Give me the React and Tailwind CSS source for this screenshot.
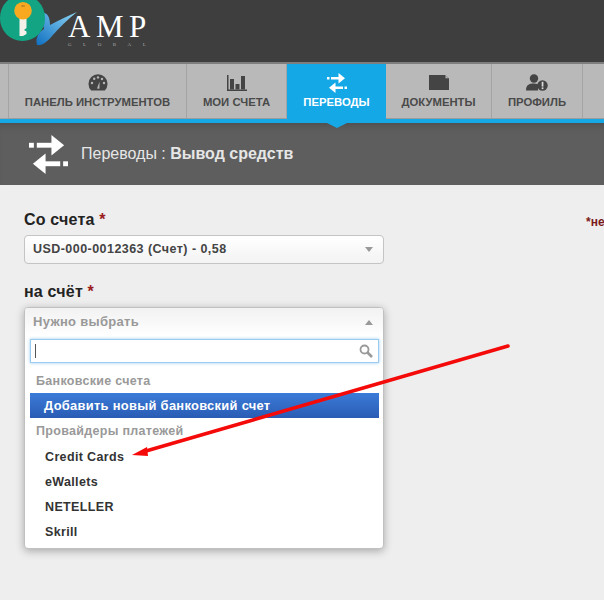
import React from "react";

const sans = "font-['Liberation_Sans',Arial,sans-serif]";

const GaugeIcon = () => (
  <svg width="20" height="18" viewBox="0 0 20 18">
    <path fill="#444" d="M3.2 16.5A9.5 9.5 0 1 1 16.8 16.5Z" />
    <g fill="#b8b8b8">
      <circle cx="4" cy="9" r="1.2" />
      <circle cx="6.2" cy="4.8" r="1.2" />
      <circle cx="10" cy="3.4" r="1.2" />
      <circle cx="14" cy="5" r="1.2" />
      <circle cx="16" cy="9" r="1.2" />
      <path d="M9 14.5L11.6 7.5L11.4 14.8Z" />
    </g>
  </svg>
);

const BarsIcon = () => (
  <svg width="20" height="16" viewBox="0 0 20 16">
    <g fill="#444">
      <rect x="0" y="0" width="1.5" height="16" />
      <rect x="0" y="14.5" width="20" height="1.5" />
      <rect x="3" y="4" width="4" height="10.5" />
      <rect x="8.5" y="9" width="4" height="5.5" />
      <rect x="14" y="1" width="4" height="13.5" />
    </g>
  </svg>
);

const TransferIcon = ({ size = 20 }) => (
  <svg width={size} height={size} viewBox="0 0 40 40" fill="#fff">
    <rect x="0" y="8" width="5" height="5" />
    <rect x="8" y="8" width="16" height="5" />
    <path d="M23 0L36 10.500L23 21Z" />
    <rect x="35" y="27" width="5" height="5" />
    <rect x="16" y="27" width="16" height="5" />
    <path d="M17 19L4 29.500L17 40Z" />
  </svg>
);

const FolderIcon = () => (
  <svg width="20" height="15" viewBox="0 0 20 15">
    <path fill="#444" d="M0 0H16L20 3.500V15H0Z" />
    <path fill="#b8b8b8" d="M16.500 0.500L19.500 3.200H16.500Z" />
  </svg>
);

const ProfileIcon = () => (
  <svg width="22" height="17" viewBox="0 0 22 17">
    <circle cx="8" cy="4.500" r="4.200" fill="#444" />
    <path fill="#444" d="M0 16.500C0 11 3 9.500 8 9.500C11 9.500 12 10.500 12 10.500V16.500Z" />
    <circle cx="16.500" cy="11.500" r="5.200" fill="#444" />
    <rect x="15.700" y="7.800" width="1.700" height="4.800" fill="#ddd" />
    <rect x="15.700" y="13.400" width="1.700" height="1.700" fill="#ddd" />
  </svg>
);

const NavTab = ({ icon, label, width, active, border }) => (
  <div
    className={`relative flex flex-col items-center shrink-0 ${width} ${
      active
        ? "h-[59px] bg-[#14a8e6] text-white pt-[9px]"
        : "h-[55px] bg-[#b9b9b9] text-[#4a4a4a] pt-[9px] border-b border-[#9c9c9c]"
    } ${border ? "border-r border-r-[#a4a4a4]" : ""}`}
  >
    <div className="h-[19px] flex items-center">{icon}</div>
    <div className="text-[11.300px] font-bold leading-none mt-[4.500px]">{label}</div>
    {active && (
      <div className="absolute left-1/2 -ml-[10px] top-[59px] w-0 h-0 border-x-[10px] border-x-transparent border-t-[5px] border-t-[#14a8e6]" />
    )}
  </div>
);

const Field = ({ label, children }) => (
  <div>
    <div className="text-[16px] leading-[18px] font-bold text-[#222] tracking-[0.2px]">
      {label} <span className="text-[#9b1c1c]">*</span>
    </div>
    {children}
  </div>
);

const Option = ({ children }) => (
  <div className="h-[25.300px] pl-[20px] text-[12.500px] leading-[25px] font-bold text-[#333] tracking-[0.35px]">{children}</div>
);

const GroupLabel = ({ children }) => (
  <div className="pl-[11px] text-[12.500px] leading-[18px] font-bold text-[#999] tracking-[0.3px]">{children}</div>
);

export default function App() {
  return (
    <div className={`relative w-[604px] h-[600px] overflow-hidden bg-[#eeeeee] ${sans}`}>
      {/* HEADER */}
      <div className="h-[62px] bg-[#3e3e3e] flex items-start pl-[36px]">
        <svg className="mt-[11px] shrink-0" width="42" height="35" viewBox="0 0 42 35">
          <defs>
            <linearGradient id="swoosh" x1="0" y1="1" x2="1" y2="0">
              <stop offset="0" stopColor="#0f6fc0" />
              <stop offset="1" stopColor="#8fd6f5" />
            </linearGradient>
          </defs>
          <path fill="url(#swoosh)" d="M1 34C-1 27 3 21 8 18C7 13 5 5 8 2C13 3 14 9 14 14C22 10 31 5 41 1C31 9 23 17 16 25C11 31 6 35 1 34Z" />
        </svg>
        <div className="ml-[-10px] mt-[14px] flex flex-col items-start font-['Liberation_Serif',serif] text-white">
          <div className="text-[31px] leading-[26px] tracking-[5.500px]">AMP</div>
          <div className="text-[5px] leading-[5px] tracking-[11.500px] text-[#aaaaaa] mt-[2px]">GLOBAL</div>
        </div>
      </div>

      {/* KEY BADGE */}
      <div className="absolute left-0 top-[-5px] w-[45px] h-[46px] rounded-full bg-[#13a583] overflow-hidden">
        <svg className="absolute left-[14px] top-[7px]" width="18" height="34" viewBox="0 0 18 34">
          <path fill="#f3f1ea" d="M5.500 14H12.500V26L10 28L12.500 29.500V32L9 34H5.500Z" />
          <circle cx="9" cy="8.800" r="8.800" fill="#f8a91f" />
          <rect x="7" y="3" width="4" height="2" rx="1" fill="#c98a25" />
        </svg>
      </div>

      {/* NAV */}
      <div className="h-[61px] border-t-2 border-[#7e7e7e] bg-[#14a8e6]">
        <div className="flex items-start h-[55px]">
          <div className="w-[9px] h-[55px] shrink-0 bg-[#b9b9b9] border-r border-b border-[#a4a4a4]" />
          <NavTab width="w-[178px]" border icon={<GaugeIcon />} label="ПАНЕЛЬ ИНСТРУМЕНТОВ" />
          <NavTab width="w-[100px]" border icon={<BarsIcon />} label="МОИ СЧЕТА" />
          <NavTab width="w-[99px]" active icon={<TransferIcon />} label="ПЕРЕВОДЫ" />
          <NavTab width="w-[106px]" border icon={<FolderIcon />} label="ДОКУМЕНТЫ" />
          <NavTab width="w-[91px]" border icon={<ProfileIcon />} label="ПРОФИЛЬ" />
          <div className="flex-1 h-[55px] bg-[#b9b9b9] border-b border-[#9c9c9c]" />
        </div>
      </div>

      {/* PAGE TITLE */}
      <div className="h-[62px] bg-[#5e5e5e] flex items-center pl-[29px] shadow-[inset_0_8px_10px_-8px_#444]">
        <TransferIcon size={39} />
        <div className="ml-[13px] text-[16px] text-[#e6e6e6]">
          Переводы : <span className="font-bold">Вывод средств</span>
        </div>
      </div>

      {/* FORM */}
      <div className="relative pl-[24px] pt-[26px] w-[384px] box-content">
        <Field label="Со счета">
          <div className="mt-[6px] h-[29px] w-[360px] rounded-[4px] border border-[#c4c4c4] bg-gradient-to-b from-[#ffffff] to-[#f3f3f3] flex items-center justify-between pl-[8px] pr-[10px]">
            <span className="text-[12.500px] font-bold text-[#444] tracking-[0.45px]">USD-000-0012363 (Счет) - 0,58</span>
            <span className="w-0 h-0 border-x-[4px] border-x-transparent border-t-[5px] border-t-[#999]" />
          </div>
        </Field>

        <div className="mt-[19px]">
          <Field label="на счёт">
            <div className="mt-[6px] w-[360px] h-[242px] rounded-[4px] border border-[#c0c0c0] bg-white shadow-[0_2px_8px_rgba(0,0,0,0.3)] overflow-hidden">
              <div className="h-[28px] flex items-center justify-between pl-[8px] pr-[10px] bg-gradient-to-b from-[#f2f2f2] to-[#ffffff]">
                <span className="text-[13px] font-bold text-[#999] tracking-[0.3px]">Нужно выбрать</span>
                <span className="w-0 h-0 border-x-[4px] border-x-transparent border-b-[5px] border-b-[#999]" />
              </div>
              <div className="ml-[5px] mr-[4px] mt-[3px] h-[24px] border border-[#9ccbf0] shadow-[0_0_3px_rgba(82,168,236,0.6)] flex items-center justify-between pl-[4px] pr-[5px]">
                <span className="w-px h-[14px] bg-[#555]" />
                <svg width="14" height="14" viewBox="0 0 14 14" fill="none" stroke="#999">
                  <circle cx="5.500" cy="5.500" r="4" strokeWidth="1.800" />
                  <path d="M8.500 8.500L13 13" strokeWidth="2.600" />
                </svg>
              </div>
              <div className="mt-[9px]">
                <GroupLabel>Банковские счета</GroupLabel>
              </div>
              <div className="mt-[3px] ml-[5px] mr-[4px] h-[25px] pl-[14px] text-[12.900px] leading-[25px] font-bold text-white tracking-[0.3px] bg-gradient-to-b from-[#3b7cd9] to-[#2a5cb4]">
                Добавить новый банковский счет
              </div>
              <div className="mt-[4px]">
                <GroupLabel>Провайдеры платежей</GroupLabel>
              </div>
              <div className="mt-[4.500px]">
                <Option>Credit Cards</Option>
                <Option>eWallets</Option>
                <Option>NETELLER</Option>
                <Option>Skrill</Option>
              </div>
            </div>
          </Field>
        </div>
      </div>

      {/* REQUIRED NOTE */}
      <div className="absolute left-[586px] top-[213px] text-[12px] font-bold text-[#7b1a1a] whitespace-nowrap">*необходимо</div>

      {/* ANNOTATION ARROW */}
      <svg className="absolute left-0 top-0" width="604" height="600" viewBox="0 0 604 600">
        <path d="M508 346L146 451" stroke="#f50a0a" strokeWidth="3.500" strokeLinecap="round" fill="none" />
        <path d="M132 455L147 447L148 456Z" fill="#f50a0a" />
      </svg>
    </div>
  );
}
